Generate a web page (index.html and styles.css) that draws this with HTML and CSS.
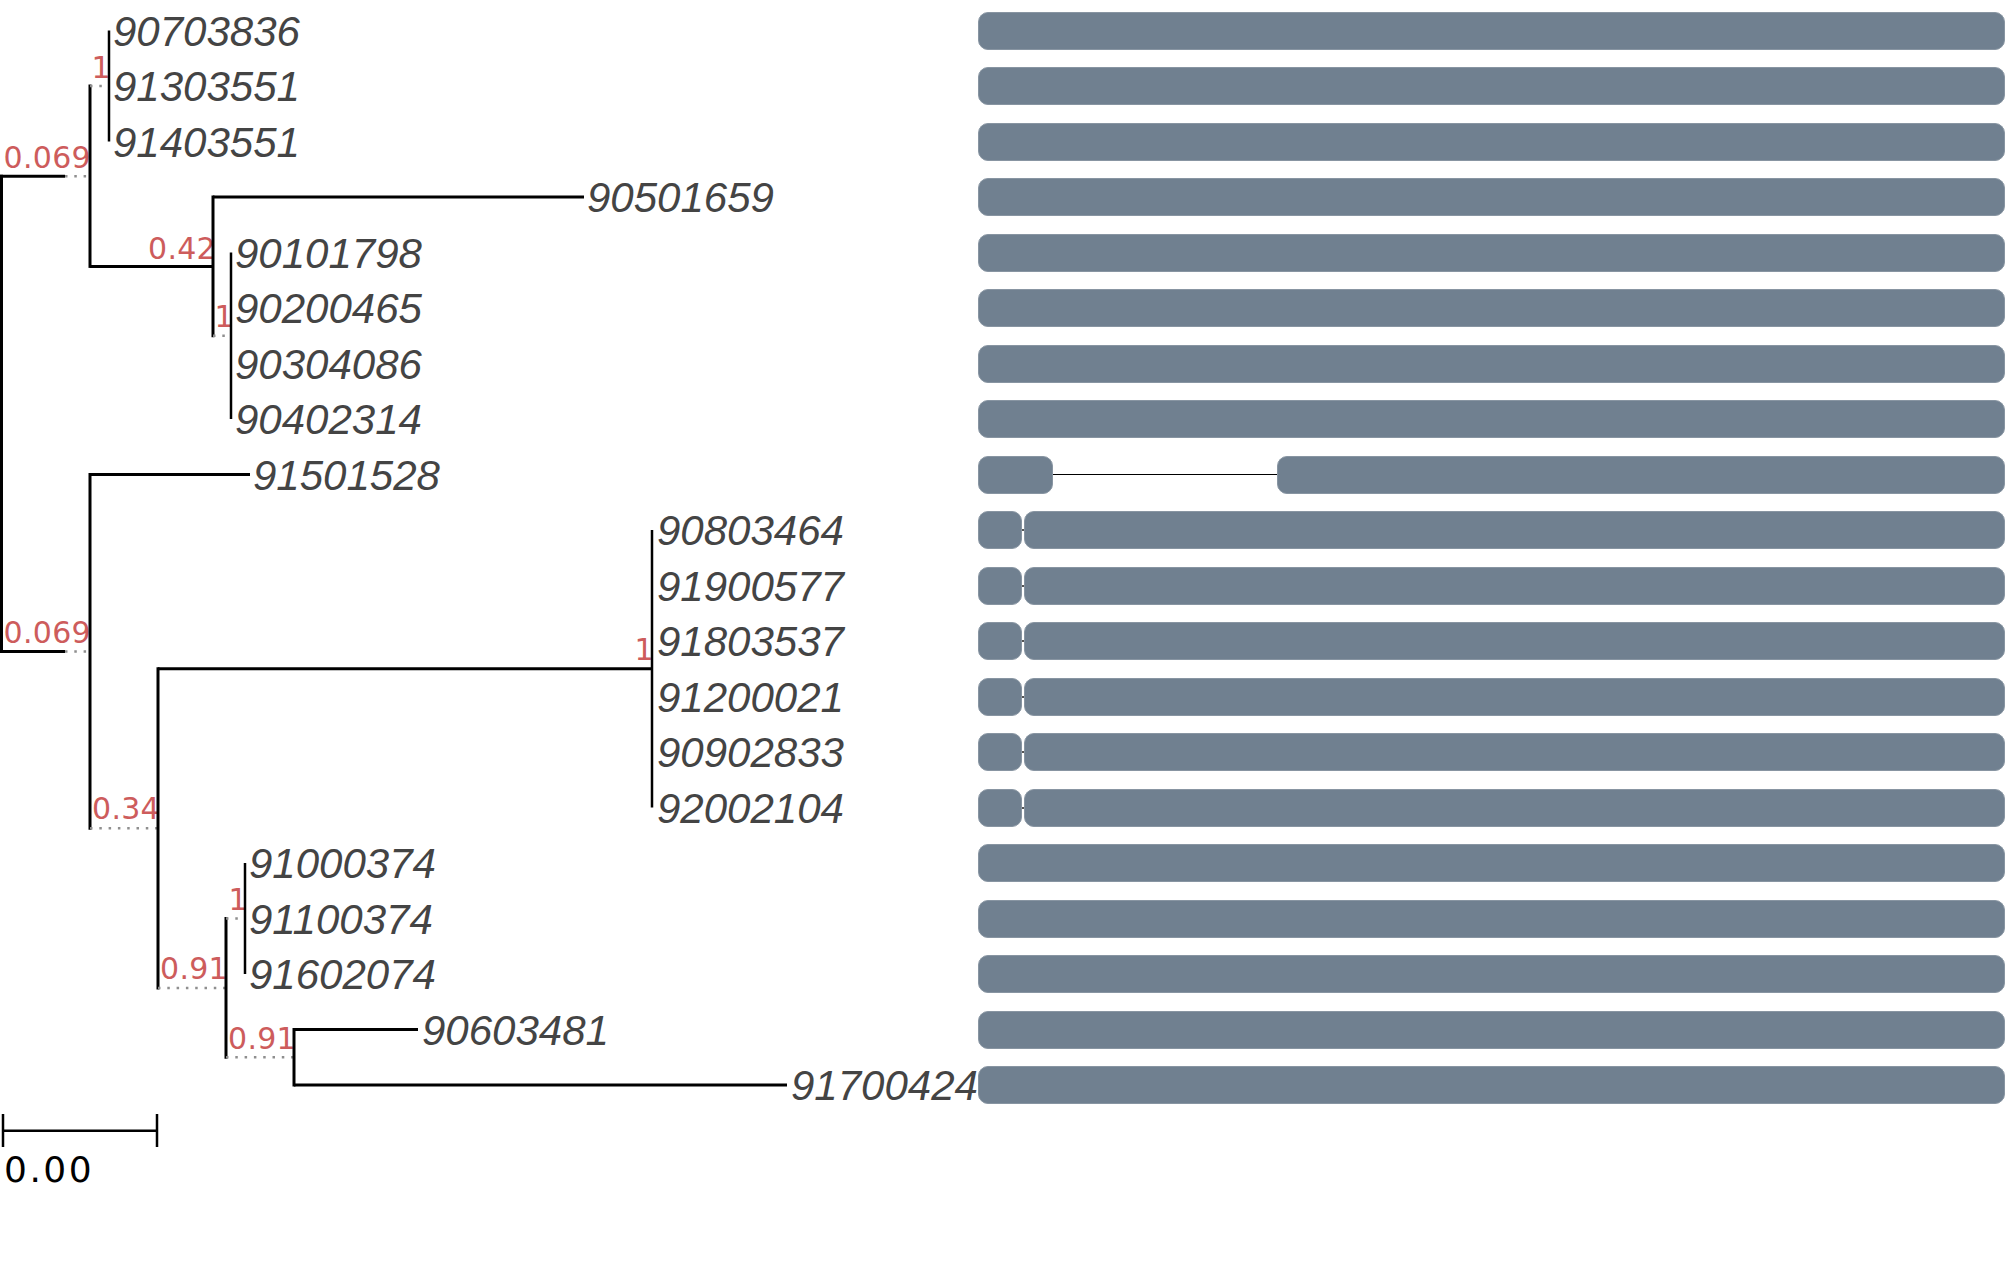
FILE: index.html
```html
<!DOCTYPE html>
<html>
<head>
<meta charset="utf-8">
<title>Tree</title>
<link rel="stylesheet" href="styles.css">
</head>
<body>
<div class="figure">
  <svg class="tree" width="978" height="1269" viewBox="0 0 978 1269" xmlns="http://www.w3.org/2000/svg">
    <!-- root -->
    <line class="vb" x1="1.5" y1="176.2" x2="1.5" y2="651.4"/>
    <!-- clade A -->
    <line class="br" x1="0" y1="176.2" x2="65" y2="176.2"/>
    <line class="dt" x1="65" y1="176.2" x2="90" y2="176.2"/>
    <text class="sup" x="91" y="168">0.069</text>
    <line class="vb" x1="90" y1="86" x2="90" y2="266.4"/>
    <!-- A1 -->
    <line class="dt" x1="90" y1="86" x2="109" y2="86"/>
    <text class="sup" x="111" y="78">1</text>
    <line class="vl" x1="109" y1="30.5" x2="109" y2="141.5"/>
    <text class="leaf" x="113" y="45.5">90703836</text>
    <text class="leaf" x="113" y="101">91303551</text>
    <text class="leaf" x="113" y="156.5">91403551</text>
    <!-- A2 -->
    <line class="br" x1="90" y1="266.4" x2="213" y2="266.4"/>
    <text class="sup" x="216" y="258.5">0.42</text>
    <line class="vb" x1="213" y1="197" x2="213" y2="335.75"/>
    <line class="br" x1="213" y1="197" x2="584" y2="197"/>
    <text class="leaf" x="587" y="212">90501659</text>
    <line class="dt" x1="213" y1="335.75" x2="231" y2="335.75"/>
    <text class="sup" x="234" y="327">1</text>
    <line class="vl" x1="231" y1="252.5" x2="231" y2="419"/>
    <text class="leaf" x="235" y="267.5">90101798</text>
    <text class="leaf" x="235" y="323">90200465</text>
    <text class="leaf" x="235" y="378.5">90304086</text>
    <text class="leaf" x="235" y="434">90402314</text>
    <!-- clade B -->
    <line class="br" x1="0" y1="651.4" x2="65" y2="651.4"/>
    <line class="dt" x1="65" y1="651.4" x2="90" y2="651.4"/>
    <text class="sup" x="91" y="643">0.069</text>
    <line class="vb" x1="90" y1="474.5" x2="90" y2="828.3"/>
    <line class="br" x1="90" y1="474.5" x2="250" y2="474.5"/>
    <text class="leaf" x="253" y="489.5">91501528</text>
    <!-- B2 -->
    <line class="dt" x1="90" y1="828.3" x2="158" y2="828.3"/>
    <text class="sup" x="160" y="819">0.34</text>
    <line class="vb" x1="158" y1="668.75" x2="158" y2="987.9"/>
    <!-- B2a -->
    <line class="br" x1="158" y1="668.75" x2="652" y2="668.75"/>
    <text class="sup" x="654" y="660">1</text>
    <line class="vl" x1="652" y1="530" x2="652" y2="807.5"/>
    <text class="leaf" x="657" y="545">90803464</text>
    <text class="leaf" x="657" y="600.5">91900577</text>
    <text class="leaf" x="657" y="656">91803537</text>
    <text class="leaf" x="657" y="711.5">91200021</text>
    <text class="leaf" x="657" y="767">90902833</text>
    <text class="leaf" x="657" y="822.5">92002104</text>
    <!-- B2b -->
    <line class="dt" x1="158" y1="987.9" x2="226" y2="987.9"/>
    <text class="sup" x="228" y="979">0.91</text>
    <line class="vb" x1="226" y1="918.5" x2="226" y2="1057.25"/>
    <line class="dt" x1="226" y1="918.5" x2="245" y2="918.5"/>
    <text class="sup" x="248" y="910">1</text>
    <line class="vl" x1="245" y1="863" x2="245" y2="974"/>
    <text class="leaf" x="249" y="878">91000374</text>
    <text class="leaf" x="249" y="933.5">91100374</text>
    <text class="leaf" x="249" y="989">91602074</text>
    <line class="dt" x1="226" y1="1057.25" x2="294" y2="1057.25"/>
    <text class="sup" x="296" y="1049">0.91</text>
    <line class="vb" x1="294" y1="1029.5" x2="294" y2="1085"/>
    <line class="br" x1="294" y1="1029.5" x2="418" y2="1029.5"/>
    <text class="leaf" x="422" y="1044.5">90603481</text>
    <line class="br" x1="294" y1="1085" x2="787" y2="1085"/>
    <text class="leaf" x="791" y="1100">91700424</text>
    <!-- scale -->
    <line class="sc" x1="3" y1="1130.7" x2="157" y2="1130.7"/>
    <line class="sc" x1="3" y1="1114" x2="3" y2="1147"/>
    <line class="sc" x1="157" y1="1114" x2="157" y2="1147"/>
    <text class="scale-label" x="4" y="1181.5">0.00</text>
  </svg>
  <div class="tracks">
    <div class="track"><div class="seg"></div></div>
    <div class="track"><div class="seg"></div></div>
    <div class="track"><div class="seg"></div></div>
    <div class="track"><div class="seg"></div></div>
    <div class="track"><div class="seg"></div></div>
    <div class="track"><div class="seg"></div></div>
    <div class="track"><div class="seg"></div></div>
    <div class="track"><div class="seg"></div></div>
    <div class="track"><div class="seg lead"></div><div class="link long"></div><div class="seg"></div></div>
    <div class="track"><div class="seg head"></div><div class="link"></div><div class="seg"></div></div>
    <div class="track"><div class="seg head"></div><div class="link"></div><div class="seg"></div></div>
    <div class="track"><div class="seg head"></div><div class="link"></div><div class="seg"></div></div>
    <div class="track"><div class="seg head"></div><div class="link"></div><div class="seg"></div></div>
    <div class="track"><div class="seg head"></div><div class="link"></div><div class="seg"></div></div>
    <div class="track"><div class="seg head"></div><div class="link"></div><div class="seg"></div></div>
    <div class="track"><div class="seg"></div></div>
    <div class="track"><div class="seg"></div></div>
    <div class="track"><div class="seg"></div></div>
    <div class="track"><div class="seg"></div></div>
    <div class="track"><div class="seg"></div></div>
  </div>
</div>
</body>
</html>
```
FILE: styles.css
```css
html, body {
  margin: 0;
  padding: 0;
  background: #ffffff;
}

.figure {
  display: flex;
  align-items: flex-start;
  width: 2007px;
  height: 1269px;
}

.tree {
  flex: 0 0 978px;
  overflow: visible;
  display: block;
}

.br {
  stroke: #000000;
  stroke-width: 3;
}

.vb {
  stroke: #000000;
  stroke-width: 3;
  stroke-linecap: square;
}

.vl {
  stroke: #000000;
  stroke-width: 2.5;
}

.dt {
  stroke: #8f8f8f;
  stroke-width: 2.5;
  stroke-dasharray: 2.5 6.8;
}

.sc {
  stroke: #000000;
  stroke-width: 2.5;
}

.leaf {
  font-family: "Liberation Sans", Arial, sans-serif;
  font-style: italic;
  font-size: 42px;
  fill: #444444;
}

.sup {
  font-family: "DejaVu Sans", sans-serif;
  font-size: 30px;
  letter-spacing: 0.3px;
  fill: #cd5c5c;
  text-anchor: end;
}

.scale-label {
  font-family: "DejaVu Sans", sans-serif;
  font-size: 36px;
  letter-spacing: 2.5px;
  fill: #000000;
}

.tracks {
  width: 1027px;
  display: flex;
  flex-direction: column;
  gap: 17.5px;
  padding-top: 11.5px;
}

.track {
  height: 38px;
  display: flex;
  align-items: center;
}

.seg {
  flex: 1;
  height: 38px;
  box-sizing: border-box;
  background: #708090;
  border: 1px solid #8895a2;
  border-radius: 10px;
}

.seg.lead {
  flex: 0 0 75px;
}

.seg.head {
  flex: 0 0 44px;
}

.link {
  flex: 0 0 2px;
  height: 2px;
  background: #555555;
}

.link.long {
  flex: 0 0 224px;
  height: 1.5px;
  background: #000000;
}
```
